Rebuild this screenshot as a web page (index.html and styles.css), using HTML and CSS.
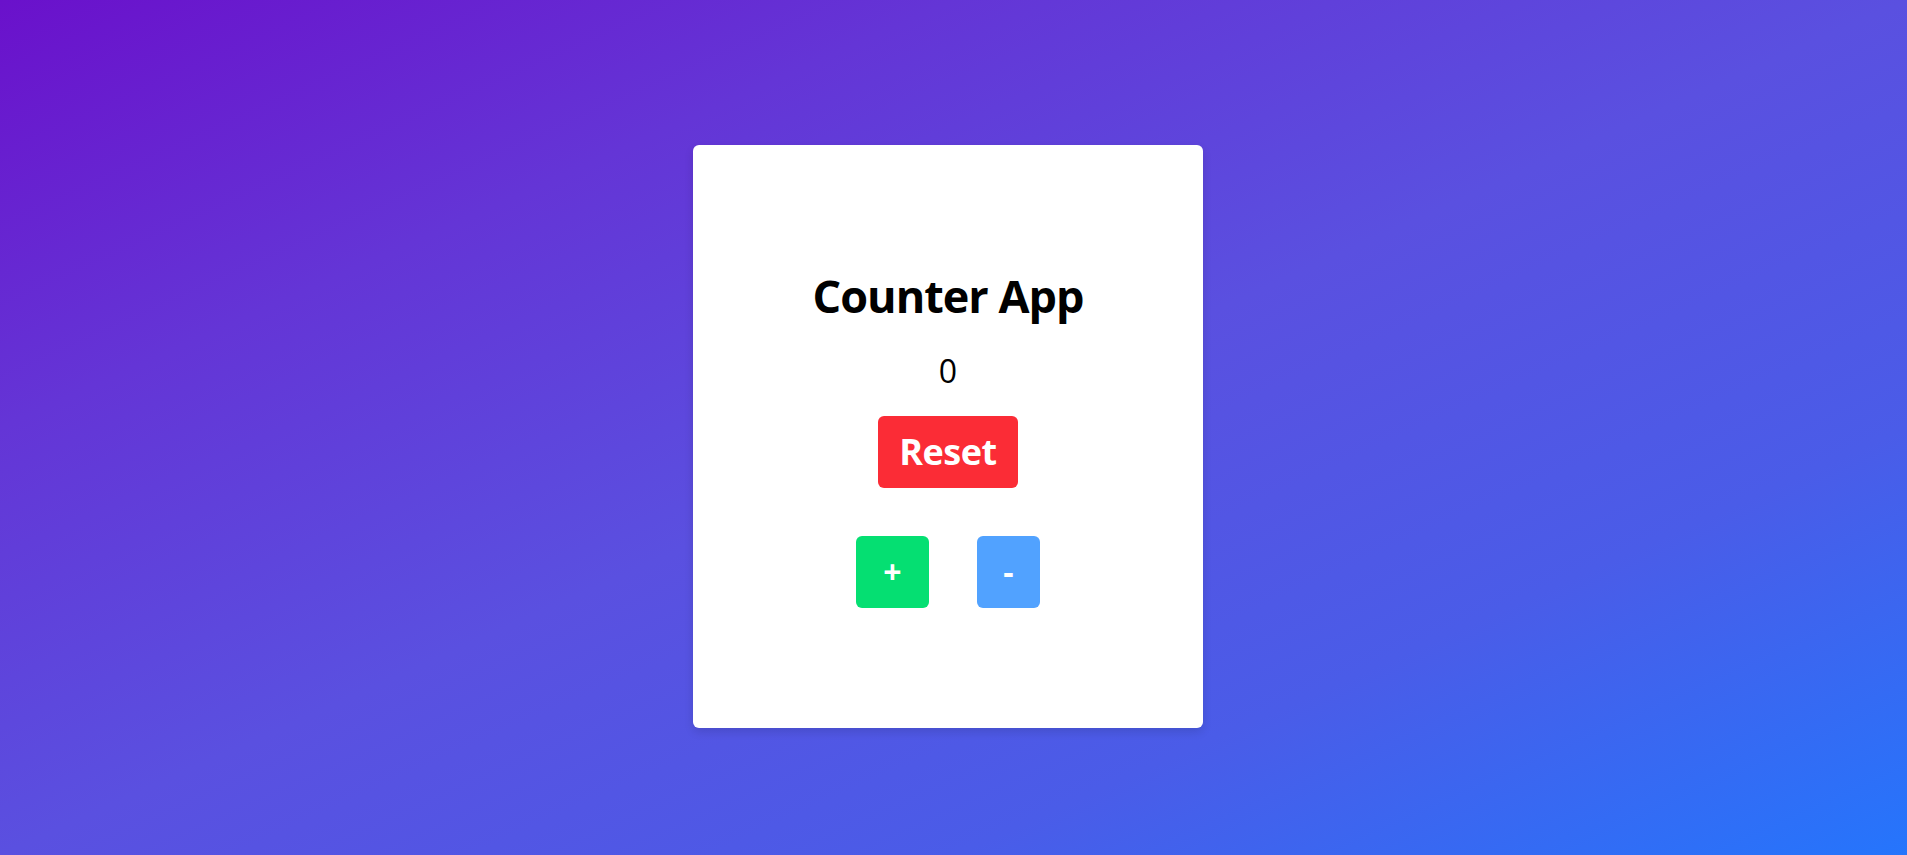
FILE: index.html
```html
<!DOCTYPE html>
<html lang="en">
<head>
<meta charset="utf-8">
<title>Counter App</title>
<link rel="stylesheet" href="styles.css">
</head>
<body>
  <main class="card">
    <h1 class="title">Counter App</h1>
    <div class="count">0</div>
    <button class="btn btn-reset">Reset</button>
    <div class="controls">
      <button class="btn btn-step btn-plus">+</button>
      <button class="btn btn-step btn-minus">-</button>
    </div>
  </main>
</body>
</html>
```

FILE: styles.css
```css
html, body {
  margin: 0;
  height: 100%;
}

body {
  box-sizing: border-box;
  display: flex;
  align-items: center;
  justify-content: center;
  padding: 18px 11px 0 0;
  background: linear-gradient(to bottom right, #6a11cb 0%, #6435d6 25%, #5a50e0 50%, #4a5ce8 75%, #2575fc 100%);
  font-family: "Open Sans", "Noto Sans", "Liberation Sans", sans-serif;
}

.card {
  box-sizing: border-box;
  width: 510px;
  height: 583px;
  padding: 124px 0 120px;
  background: #ffffff;
  border-radius: 6px;
  box-shadow: 0 4px 10px rgba(0, 0, 0, 0.12);
  display: flex;
  flex-direction: column;
  align-items: center;
}

.title {
  margin: 0;
  font-size: 45px;
  line-height: 54px;
  font-weight: 700;
  letter-spacing: -1px;
  color: #000000;
}

.count {
  margin-top: 28px;
  font-size: 32px;
  line-height: 40px;
  font-weight: 400;
  color: #000000;
}

.btn {
  border: none;
  border-radius: 6px;
  color: #ffffff;
  font-family: inherit;
  font-weight: 700;
  cursor: pointer;
}

.btn-reset {
  margin-top: 25px;
  width: 140px;
  height: 72px;
  padding: 0;
  font-size: 36px;
  line-height: 48px;
  letter-spacing: -0.5px;
  background: #fb2c36;
}

.controls {
  margin-top: 48px;
  display: flex;
  gap: 48px;
}

.btn-step {
  height: 72px;
  padding: 0;
  font-size: 32px;
  line-height: 42px;
}

.btn-plus {
  width: 73px;
  background: #05df72;
}

.btn-minus {
  width: 63px;
  background: #51a2ff;
}
```
